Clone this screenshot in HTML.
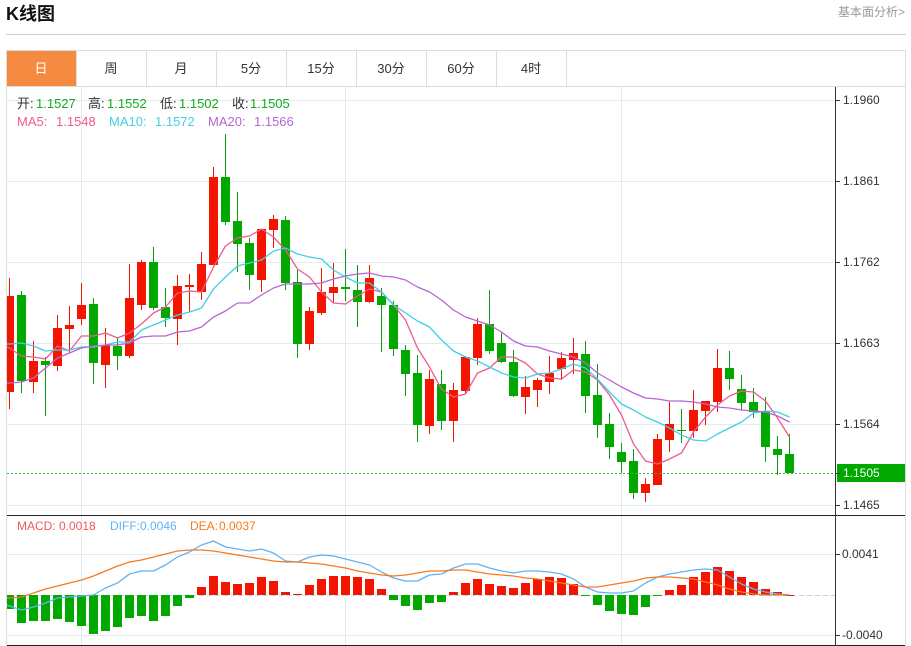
<!DOCTYPE html>
<html lang="zh">
<head>
<meta charset="utf-8">
<title>K线图</title>
<style>
html,body{margin:0;padding:0;background:#fff;width:911px;height:646px;overflow:hidden}
svg{position:absolute;left:0;top:0;display:block}
text{font-family:"Liberation Sans","Noto Sans CJK SC",sans-serif}
</style>
</head>
<body>
<svg width="911" height="646" viewBox="0 0 911 646" xmlns="http://www.w3.org/2000/svg">
<rect width="911" height="646" fill="#fff"/>
<text x="6" y="20" font-size="18" font-weight="bold" fill="#111">K线图</text>
<text x="838" y="16" font-size="12" fill="#999">基本面分析&gt;</text>
<rect x="6" y="34" width="900" height="1" fill="#ccc"/>

<!-- frame and tabs -->
<rect x="6" y="50" width="900" height="1" fill="#ddd"/>
<rect x="6" y="86" width="900" height="1" fill="#ddd"/>
<rect x="6" y="50" width="1" height="596" fill="#ddd"/>
<rect x="905" y="50" width="1" height="596" fill="#ddd"/>
<rect x="7" y="51" width="69" height="35" fill="#f58b40"/>
<path d="M76.5 51V86M146.5 51V86M216.5 51V86M286.5 51V86M356.5 51V86M426.5 51V86M496.5 51V86M566.5 51V86" stroke="#ddd" fill="none"/>
<g font-size="13" fill="#333" text-anchor="middle">
<text x="41" y="73" fill="#fff">日</text>
<text x="111" y="73">周</text>
<text x="181" y="73">月</text>
<text x="251" y="73">5分</text>
<text x="321" y="73">15分</text>
<text x="391" y="73">30分</text>
<text x="461" y="73">60分</text>
<text x="531" y="73">4时</text>
</g>

<!-- grid -->
<path d="M7 100.5H835M7 181.5H835M7 262.5H835M7 343.5H835M7 424.5H835M7 505.5H835M7 554.5H835M7 635.5H835M81.5 87V645M345.5 87V645M621.5 87V645" stroke="#e1ebf2" fill="none"/>

<!-- candles -->
<path fill="none" stroke="#f21600" d="M9.5 278V409M33.5 341V393M57.5 315V371M69.5 306V353M81.5 283V325M105.5 328V388M129.5 264V358M141.5 260V310M177.5 275V345M189.5 274V312M201.5 252V300M213.5 167V265M261.5 229V292M273.5 215V248M309.5 307V350M321.5 268V315M333.5 263V303M369.5 265V303M429.5 370V434M453.5 383V442M465.5 356V393M477.5 318V365M525.5 376V414M537.5 378V407M549.5 356V394M561.5 352V380M573.5 338V374M645.5 478V502M657.5 434V485M669.5 402V452M693.5 390V438M705.5 401V425M717.5 349V412"/>
<path fill="none" stroke="#0b9a12" d="M21.5 291V393M45.5 357V416M93.5 298V384M117.5 338V370M153.5 247V310M165.5 288V327M225.5 134V225M237.5 192V272M249.5 238V290M285.5 216V290M297.5 270V358M345.5 249V301M357.5 265V327M381.5 288V352M393.5 301V356M405.5 345V396M417.5 355V442M441.5 370V430M489.5 290V354M501.5 333V363M513.5 350V397M585.5 341V413M597.5 364V438M609.5 413V459M621.5 443V473M633.5 449V499M681.5 409V443M729.5 351V390M741.5 375V410M753.5 388V418M765.5 397V462M777.5 436V475M789.5 434V473"/>
<path fill="#f41500" d="M7 296h7v96h-7zM29 361h9v21h-9zM53 328h9v38h-9zM65 325h9v4h-9zM77 305h9v14h-9zM101 345h9v20h-9zM125 298h9v58h-9zM137 262h9v43h-9zM173 286h9v33h-9zM185 285h9v2h-9zM197 264h9v28h-9zM209 177h9v88h-9zM257 229h9v51h-9zM269 219h9v11h-9zM305 311h9v33h-9zM317 292h9v21h-9zM329 287h9v6h-9zM365 278h9v24h-9zM425 379h9v47h-9zM449 390h9v31h-9zM461 357h9v34h-9zM473 324h9v34h-9zM521 387h9v10h-9zM533 380h9v10h-9zM545 373h9v9h-9zM557 358h9v11h-9zM569 353h9v7h-9zM641 484h9v9h-9zM653 439h9v46h-9zM665 424h9v16h-9zM689 410h9v21h-9zM701 401h9v10h-9zM713 368h9v34h-9z"/>
<path fill="#00a800" d="M17 295h9v86h-9zM41 361h9v4h-9zM89 304h9v59h-9zM113 346h9v10h-9zM149 262h9v46h-9zM161 307h9v11h-9zM221 177h9v45h-9zM233 221h9v23h-9zM245 243h9v32h-9zM281 220h9v63h-9zM293 282h9v62h-9zM341 287h9v2h-9zM353 290h9v12h-9zM377 296h9v9h-9zM389 305h9v44h-9zM401 350h9v24h-9zM413 373h9v52h-9zM437 384h9v37h-9zM485 324h9v27h-9zM497 343h9v19h-9zM509 362h9v34h-9zM581 354h9v42h-9zM593 395h9v30h-9zM605 424h9v23h-9zM617 452h9v10h-9zM629 461h9v32h-9zM677 430h9v1h-9zM725 368h9v11h-9zM737 389h9v14h-9zM749 402h9v10h-9zM761 411h9v36h-9zM773 449h9v6h-9zM785 454h9v19h-9z"/>

<!-- MA lines -->
<g fill="none" stroke-width="1.3" stroke-linejoin="round">
<polyline stroke="#ee5a8f" points="7,347 9.5,348 21.5,356 33.5,357 45.5,359 57.5,346 69.5,351 81.5,336 93.5,336 105.5,333 117.5,338 129.5,333 141.5,324 153.5,313 165.5,307 177.5,293 189.5,291 201.5,292 213.5,267 225.5,246 237.5,238 249.5,236 261.5,229 273.5,237 285.5,250 297.5,269 309.5,277 321.5,292 333.5,303 345.5,304 357.5,296 369.5,289 381.5,292 393.5,305 405.5,320 417.5,348 429.5,367 441.5,389 453.5,397 465.5,394 477.5,373 489.5,368 501.5,357 513.5,357 525.5,363 537.5,374 549.5,378 561.5,379 573.5,370 585.5,372 597.5,380 609.5,395 621.5,415 633.5,444 645.5,461 657.5,464 669.5,459 681.5,453 693.5,432 705.5,417 717.5,405 729.5,396 741.5,391 753.5,392 765.5,401 777.5,418 789.5,437"/>
<polyline stroke="#3fd0e4" points="7,344 9.5,344 21.5,343 33.5,346 45.5,351 57.5,350 69.5,350 81.5,347 93.5,347 105.5,345 117.5,342 129.5,342 141.5,330 153.5,325 165.5,320 177.5,315 189.5,312 201.5,308 213.5,289 225.5,277 237.5,266 249.5,263 261.5,260 273.5,251 285.5,248 297.5,254 309.5,257 321.5,259 333.5,270 345.5,277 357.5,283 369.5,283 381.5,292 393.5,305 405.5,313 417.5,321 429.5,327 441.5,340 453.5,351 465.5,357 477.5,361 489.5,367 501.5,373 513.5,377 525.5,378 537.5,374 549.5,373 561.5,369 573.5,364 585.5,368 597.5,379 609.5,392 621.5,404 633.5,410 645.5,417 657.5,422 669.5,428 681.5,435 693.5,440 705.5,441 717.5,434 729.5,428 741.5,422 753.5,413 765.5,411 777.5,412 789.5,417"/>
<polyline stroke="#b965d2" points="7,383 9.5,383 21.5,382 33.5,378 45.5,368 57.5,358 69.5,353 81.5,348 93.5,346 105.5,345 117.5,345 129.5,343 141.5,337 153.5,336 165.5,336 177.5,332 189.5,331 201.5,327 213.5,317 225.5,311 237.5,303 249.5,303 261.5,295 273.5,288 285.5,284 297.5,284 309.5,284 321.5,283 333.5,279 345.5,276 357.5,274 369.5,273 381.5,276 393.5,277 405.5,280 417.5,287 429.5,292 441.5,300 453.5,310 465.5,317 477.5,321 489.5,325 501.5,332 513.5,341 525.5,346 537.5,347 549.5,351 561.5,354 573.5,357 585.5,363 597.5,373 609.5,380 621.5,387 633.5,393 645.5,398 657.5,399 669.5,401 681.5,401 693.5,402 705.5,404 717.5,407 729.5,408 741.5,410 753.5,411 765.5,412 777.5,416 789.5,422"/>
</g>

<!-- last price line -->
<path d="M7 473.5H835" stroke="#2fb83e" stroke-dasharray="2 2" fill="none"/>

<!-- top labels -->
<g font-size="13">
<text x="17" y="108" fill="#333">开:</text><text x="36" y="108" fill="#12ad1c">1.1527</text>
<text x="88" y="108" fill="#333">高:</text><text x="107" y="108" fill="#12ad1c">1.1552</text>
<text x="160" y="108" fill="#333">低:</text><text x="179" y="108" fill="#12ad1c">1.1502</text>
<text x="232" y="108" fill="#333">收:</text><text x="250" y="108" fill="#12ad1c">1.1505</text>
<text x="17" y="126" fill="#ee5a8f">MA5:</text><text x="56" y="126" fill="#ee5a8f">1.1548</text>
<text x="109" y="126" fill="#3fd0e4">MA10:</text><text x="155" y="126" fill="#3fd0e4">1.1572</text>
<text x="208" y="126" fill="#b965d2">MA20:</text><text x="254" y="126" fill="#b965d2">1.1566</text>
</g>

<!-- MACD -->
<path d="M7 595.5H835" stroke="#b5d9ec" stroke-dasharray="5 3" fill="none"/>
<path fill="#f41500" d="M197 587h9v8h-9zM209 576h9v19h-9zM221 582h9v13h-9zM233 584h9v11h-9zM245 583h9v12h-9zM257 577h9v18h-9zM269 581h9v14h-9zM281 592h9v3h-9zM293 594h9v1h-9zM305 585h9v10h-9zM317 579h9v16h-9zM329 576h9v19h-9zM341 576h9v19h-9zM353 577h9v18h-9zM365 579h9v16h-9zM377 589h9v6h-9zM449 592h9v3h-9zM461 583h9v12h-9zM473 579h9v16h-9zM485 584h9v11h-9zM497 586h9v9h-9zM509 588h9v7h-9zM521 583h9v12h-9zM533 579h9v16h-9zM545 577h9v18h-9zM557 578h9v17h-9zM569 584h9v11h-9zM665 590h9v5h-9zM677 585h9v10h-9zM689 577h9v18h-9zM701 572h9v23h-9zM713 567h9v28h-9zM725 571h9v24h-9zM737 577h9v18h-9zM749 582h9v13h-9zM761 589h9v6h-9zM773 592h9v3h-9zM785 595h9v1h-9z"/>
<path fill="#00a800" d="M7 595h7v14h-7zM17 595h9v28h-9zM29 595h9v26h-9zM41 595h9v26h-9zM53 595h9v24h-9zM65 595h9v27h-9zM77 595h9v31h-9zM89 595h9v39h-9zM101 595h9v36h-9zM113 595h9v32h-9zM125 595h9v23h-9zM137 595h9v21h-9zM149 595h9v26h-9zM161 595h9v21h-9zM173 595h9v11h-9zM185 595h9v3h-9zM389 595h9v5h-9zM401 595h9v11h-9zM413 595h9v15h-9zM425 595h9v8h-9zM437 595h9v7h-9zM581 595h9v1h-9zM593 595h9v10h-9zM605 595h9v16h-9zM617 595h9v19h-9zM629 595h9v20h-9zM641 595h9v12h-9zM653 595h9v1h-9z"/>
<g fill="none" stroke-width="1.3" stroke-linejoin="round">
<polyline stroke="#62b2f2" points="7,605 9.5,606 21.5,610 33.5,607 45.5,603 57.5,598 69.5,597 81.5,596 93.5,595 105.5,588 117.5,583 129.5,574 141.5,571 153.5,571 165.5,565 177.5,557 189.5,552 201.5,545 213.5,541 225.5,547 237.5,549 249.5,551 261.5,549 273.5,553 285.5,561 297.5,562 309.5,557 321.5,555 333.5,556 345.5,559 357.5,562 369.5,565 381.5,572 393.5,578 405.5,581 417.5,581 429.5,575 441.5,574 453.5,568 465.5,564 477.5,564 489.5,568 501.5,571 513.5,573 525.5,571 537.5,571 549.5,572 561.5,574 573.5,579 585.5,587 597.5,592 609.5,593 621.5,593 633.5,591 645.5,583 657.5,577 669.5,574 681.5,572 693.5,570 705.5,569 717.5,570 729.5,577 741.5,584 753.5,589 765.5,592 777.5,594 789.5,595"/>
<polyline stroke="#f67a20" points="7,598 9.5,598 21.5,597 33.5,593 45.5,589 57.5,586 69.5,583 81.5,580 93.5,576 105.5,571 117.5,566 129.5,562 141.5,560 153.5,557 165.5,554 177.5,551 189.5,550 201.5,550 213.5,551 225.5,553 237.5,555 249.5,557 261.5,559 273.5,561 285.5,562 297.5,562 309.5,563 321.5,564 333.5,566 345.5,568 357.5,571 369.5,573 381.5,575 393.5,576 405.5,575 417.5,573 429.5,571 441.5,571 453.5,570 465.5,570 477.5,572 489.5,574 501.5,575 513.5,576 525.5,578 537.5,579 549.5,581 561.5,583 573.5,585 585.5,587 597.5,587 609.5,585 621.5,583 633.5,581 645.5,578 657.5,577 669.5,577 681.5,578 693.5,579 705.5,582 717.5,585 729.5,589 741.5,592 753.5,594 765.5,595 777.5,595 789.5,595"/>
</g>
<g font-size="12">
<text x="17" y="530" fill="#f25a5a">MACD:</text><text x="59" y="530" fill="#f25a5a">0.0018</text>
<text x="110" y="530" fill="#62b2f2">DIFF:</text><text x="140" y="530" fill="#62b2f2">0.0046</text>
<text x="190" y="530" fill="#f67a20">DEA:</text><text x="219" y="530" fill="#f67a20">0.0037</text>
</g>

<!-- axes -->
<rect x="7" y="515" width="898" height="1" fill="#222"/>
<rect x="7" y="645" width="898" height="1" fill="#222"/>
<rect x="835" y="87" width="1" height="559" fill="#333"/>
<rect x="837" y="464" width="68" height="18" fill="#00a800"/>
<path d="M836 100.5h4M836 181.5h4M836 262.5h4M836 343.5h4M836 424.5h4M836 505.5h4M836 473.5h4M836 554.5h4M836 635.5h4" stroke="#333" fill="none"/>
<g font-size="12" fill="#333">
<text x="843" y="104">1.1960</text>
<text x="843" y="185">1.1861</text>
<text x="843" y="266">1.1762</text>
<text x="843" y="347">1.1663</text>
<text x="843" y="428">1.1564</text>
<text x="843" y="477" fill="#fff">1.1505</text>
<text x="843" y="509">1.1465</text>
<text x="842" y="558">0.0041</text>
<text x="842" y="639">-0.0040</text>
</g>
</svg>
</body>
</html>
